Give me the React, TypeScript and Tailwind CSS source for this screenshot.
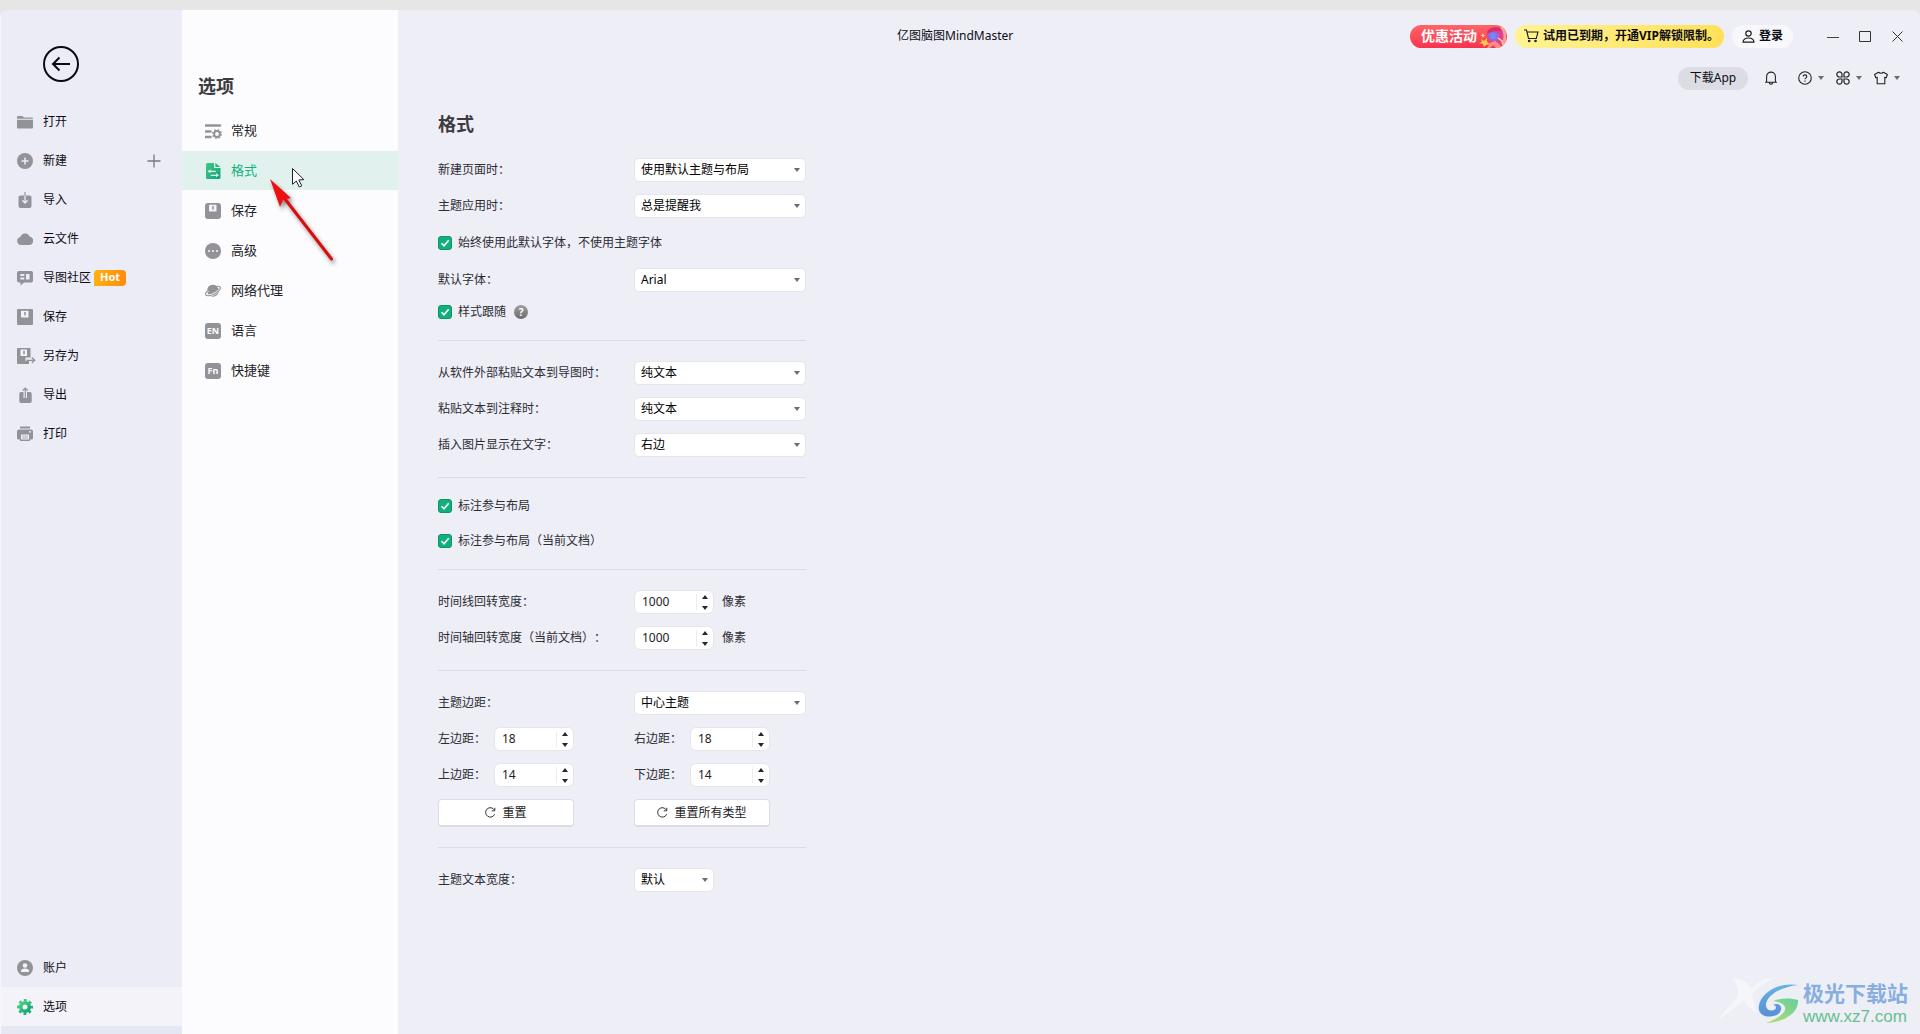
import { useState } from "react";
import type { ReactNode } from "react";

const Svg = ({ children, size = 16 }: { children: ReactNode; size?: number }) => (
  <svg width={size} height={size} viewBox="0 0 16 16" fill="none" className="shrink-0" aria-hidden="true">
    {children}
  </svg>
);

const GRAY = "#929299";

const FolderIcon = () => (
  <Svg>
    <path d="M0 3.5c0-1 .4-1.5 1.3-1.5h4.2l1.4 1.6h7.8c.9 0 1.3.4 1.3 1.2H0z" fill={GRAY} />
    <path d="M0 5.8h16v7.4c0 .9-.5 1.4-1.4 1.4H1.4C.5 14.600 0 14.100 0 13.200z" fill={GRAY} />
  </Svg>
);

const PlusCircleIcon = () => (
  <Svg>
    <circle cx="8" cy="8" r="8" fill={GRAY} />
    <path d="M8 4.500v7M4.500 8h7" stroke="#ececf6" strokeWidth="1.500" />
  </Svg>
);

const ImportIcon = () => (
  <Svg>
    <rect x="1.500" y="3.500" width="13" height="12.500" rx="2" fill={GRAY} />
    <path d="M8 3.500v7.500M5.300 8.300 8 11l2.700-2.700" stroke="#ececf6" strokeWidth="1.300" />
    <path d="M8 0v3.500" stroke={GRAY} strokeWidth="1.200" />
  </Svg>
);

const CloudIcon = () => (
  <Svg>
    <path d="M4 14a4 4 0 0 1-.6-7.900A5 5 0 0 1 12.700 5.500 4.300 4.300 0 0 1 12.300 14z" fill={GRAY} />
  </Svg>
);

const CommunityIcon = () => (
  <Svg>
    <path d="M2 1h12a2 2 0 0 1 2 2v7.500a2 2 0 0 1-2 2H7L3.500 15.500v-3H2a2 2 0 0 1-2-2V3a2 2 0 0 1 2-2z" fill={GRAY} />
    <path d="M3.300 4h4v2h-4zM3.300 7.500h4v2h-4zM9 4h3.500v5.500H9z" fill="#ececf6" />
  </Svg>
);

const SaveIcon = ({ rounded = false }: { rounded?: boolean }) => (
  <Svg>
    <rect width="16" height="16" rx={rounded ? 3 : 1} fill={GRAY} />
    <path d="M4 1.800h7.500v6.700H4z" fill="#f2f2f8" />
    <path d="M8 3v3.500" stroke={GRAY} strokeWidth="1.500" />
  </Svg>
);

const SaveAsIcon = () => (
  <svg width="19" height="16" viewBox="0 0 19 16" fill="none" className="-mr-[3px] shrink-0" aria-hidden="true">
    <path d="M1 0h12.500v9.500H8.500V13h3.500v3H1a1 1 0 0 1-1-1V1a1 1 0 0 1 1-1z" fill={GRAY} />
    <path d="M3.500 1.500h6.500V8H3.500z" fill="#f2f2f8" />
    <path d="M7 2.800v3.500" stroke={GRAY} strokeWidth="1.500" />
    <path d="M9.500 12.300h8M14.800 9.500l2.900 2.800-2.900 2.800" stroke={GRAY} strokeWidth="1.300" />
  </svg>
);

const ExportIcon = () => (
  <Svg>
    <path d="M4 5h2.500v6h3.500V5H13a1.700 1.700 0 0 1 1.700 1.700v7.600A1.700 1.700 0 0 1 13 16H4a1.700 1.700 0 0 1-1.700-1.700V6.700A1.700 1.700 0 0 1 4 5z" fill={GRAY} />
    <path d="M8.300 11V1M5.800 3.500 8.300 1l2.500 2.500" stroke={GRAY} strokeWidth="1.200" />
  </Svg>
);

const PrintIcon = () => (
  <Svg>
    <path d="M3 .500h10v2H3z" fill={GRAY} />
    <path d="M2 3.500h12a2 2 0 0 1 2 2V12a1.500 1.500 0 0 1-1.500 1.500H13V15H3v-1.500H1.500A1.500 1.500 0 0 1 0 12V5.500a2 2 0 0 1 2-2z" fill={GRAY} />
    <path d="M4 8.500h8v5H4z" fill="#f2f2f8" />
    <path d="M5 10h6M5 12h6" stroke={GRAY} strokeWidth=".700" />
    <circle cx="13" cy="5.800" r=".9" fill="#f2f2f8" />
  </Svg>
);

const AccountIcon = () => (
  <Svg>
    <circle cx="8" cy="8" r="8" fill={GRAY} />
    <circle cx="8" cy="5.500" r="2.300" fill="#f2f2f8" />
    <path d="M3.800 12c0-2.500 1.700-3.500 4.200-3.500s4.200 1 4.200 3.500z" fill="#f2f2f8" />
  </Svg>
);

const GearIcon = () => (
  <Svg>
    <defs>
      <linearGradient id="gear" x1="0" y1="0" x2="1" y2="1">
        <stop stopColor="#4fd07c" />
        <stop offset="1" stopColor="#0fa37a" />
      </linearGradient>
    </defs>
    <circle cx="8" cy="8" r="4.300" stroke="url(#gear)" strokeWidth="3.600" />
    <circle cx="8" cy="8" r="6.700" stroke="url(#gear)" strokeWidth="2.600" strokeDasharray="2.800 2.462" strokeDashoffset="1.400" />
  </Svg>
);

const GeneralIcon = () => (
  <svg width="17" height="16" viewBox="0 0 17 16" fill="none" className="-mr-px shrink-0" aria-hidden="true">
    <path d="M1 2.500h14M1 8.500h4.500M1 14h4.500" stroke={GRAY} strokeWidth="2.600" strokeLinecap="round" />
    <circle cx="12" cy="11" r="2.900" stroke={GRAY} strokeWidth="2" />
    <circle cx="12" cy="11" r="4.300" stroke={GRAY} strokeWidth="1.400" strokeDasharray="1.700 1.677" />
  </svg>
);

const FormatIcon = () => (
  <Svg>
    <defs>
      <linearGradient id="format" x1="0" y1="0" x2="1" y2="1">
        <stop stopColor="#3fca7d" />
        <stop offset="1" stopColor="#12a57d" />
      </linearGradient>
    </defs>
    <path d="M2.500 0H9v5h6.500v9.500A1.500 1.500 0 0 1 14 16H2.500A1.500 1.500 0 0 1 1 14.500v-13A1.500 1.500 0 0 1 2.500 0z" fill="url(#format)" />
    <path d="M10.300 0 15.500 4H10.300z" fill="#2dbb7c" />
    <path d="M3.300 8.300h7.500M5.800 12.300h7.500" stroke="#e1f1ed" strokeWidth="1.200" />
    <path d="M5.500 6.300v4l-2.700-2zM11 10.300v4l2.700-2z" fill="#e1f1ed" />
  </Svg>
);

const MoreIcon = () => (
  <Svg>
    <circle cx="8" cy="8" r="8" fill={GRAY} />
    <path d="M4 8h.01M8 8h.01M12 8h.01" stroke="#fff" strokeWidth="1.900" strokeLinecap="round" />
  </Svg>
);

const PlanetIcon = () => (
  <Svg>
    <circle cx="8" cy="7.800" r="6" fill={GRAY} />
    <ellipse cx="8" cy="8" rx="8.500" ry="3.200" transform="rotate(-27 8 8)" stroke="#fcfcfe" strokeWidth="2.400" />
    <ellipse cx="8" cy="8" rx="8.200" ry="3.300" transform="rotate(-27 8 8)" stroke={GRAY} strokeWidth="1.100" />
    <path d="M2.500 7.800A5.800 5.800 0 0 1 12.700 4c-1.500 2.500-5 4.800-10.200 3.800z" fill={GRAY} />
  </Svg>
);

const TextTile = ({ text }: { text: string }) => (
  <span className="flex size-4 shrink-0 items-center justify-center rounded-[3px] bg-[#929299] text-[9px] leading-none font-bold text-white">
    {text}
  </span>
);

const Caret = ({ className = "" }: { className?: string }) => (
  <svg width="6" height="4" viewBox="0 0 6 4" className={className} aria-hidden="true">
    <path d="M0 0h6L3 4z" fill="#6b6b70" />
  </svg>
);

const fileItems = [
  { label: "打开", icon: <FolderIcon /> },
  { label: "新建", icon: <PlusCircleIcon />, plus: true },
  { label: "导入", icon: <ImportIcon /> },
  { label: "云文件", icon: <CloudIcon /> },
  { label: "导图社区", icon: <CommunityIcon />, hot: true },
  { label: "保存", icon: <SaveIcon /> },
  { label: "另存为", icon: <SaveAsIcon /> },
  { label: "导出", icon: <ExportIcon /> },
  { label: "打印", icon: <PrintIcon /> },
];

const optionItems = [
  { label: "常规", icon: <GeneralIcon /> },
  { label: "格式", icon: <FormatIcon /> },
  { label: "保存", icon: <SaveIcon rounded /> },
  { label: "高级", icon: <MoreIcon /> },
  { label: "网络代理", icon: <PlanetIcon /> },
  { label: "语言", icon: <TextTile text="EN" /> },
  { label: "快捷键", icon: <TextTile text="Fn" /> },
];

type SideItemProps = {
  label: string;
  icon: ReactNode;
  plus?: boolean;
  hot?: boolean;
  active?: boolean;
};

const SideItem = ({ label, icon, plus, hot, active }: SideItemProps) => (
  <button type="button" className={active ? "flex h-[39px] w-full items-center bg-[#f4f3f9] px-4" : "flex h-[39px] w-full items-center px-4"}>
    {icon}
    <span className="ml-2.5">{label}</span>
    {hot && (
      <span className="ml-[3px] flex h-4 w-8 items-center justify-center rounded-[4px] rounded-bl-none bg-linear-to-r from-[#ffb012] to-[#ff8c0a] text-[11px] font-bold text-white">
        Hot
      </span>
    )}
    {plus && (
      <svg width="14" height="14" viewBox="0 0 14 14" className="mr-[5px] ml-auto" aria-hidden="true">
        <path d="M7 .500v13M.500 7h13" stroke="#77777d" strokeWidth="1.300" />
      </svg>
    )}
  </button>
);

const FileSidebar = () => (
  <aside className="flex w-[182px] shrink-0 flex-col border-l border-[#f6f6fb] bg-[#ececf6] text-xs text-[#0c0c14]">
    <button type="button" aria-label="返回" className="mt-9 ml-[42px] size-9">
      <svg width="36" height="36" viewBox="0 0 36 36" fill="none" stroke="#0a0a10" strokeWidth="2">
        <circle cx="18" cy="18" r="17" />
        <path d="M27 18H10M16.500 11.500 10 18l6.500 6.500" />
      </svg>
    </button>
    <nav className="mt-5 flex flex-col">
      {fileItems.map((item) => (
        <SideItem key={item.label} {...item} />
      ))}
    </nav>
    <nav className="mt-auto flex flex-col border-b-8 border-[#e6e7f4]">
      <SideItem label="账户" icon={<AccountIcon />} />
      <SideItem label="选项" icon={<GearIcon />} active />
    </nav>
  </aside>
);

const OptionsPanel = () => {
  const [current, setCurrent] = useState("格式");
  return (
    <section className="w-[216px] shrink-0 bg-[#fcfcfe] text-[13px] text-[#222226]">
      <h1 className="mt-[63px] mb-3 pl-4 text-lg leading-[26px] font-bold text-[#3b3b40]">选项</h1>
      <nav className="flex flex-col gap-px">
        {optionItems.map((item) => (
          <button
            key={item.label}
            type="button"
            onClick={() => setCurrent(item.label)}
            className={
              item.label === current
                ? "flex h-[39px] items-center gap-2.5 bg-[#e1f1ed] pl-[23px] text-[#12b17e]"
                : "flex h-[39px] items-center gap-2.5 pl-[23px]"
            }
          >
            {item.icon}
            {item.label}
          </button>
        ))}
      </nav>
    </section>
  );
};

const PromoArt = () => (
  <svg width="29" height="23" viewBox="0 0 29 23" fill="none" aria-hidden="true">
    <path d="M24 2c4 3 5 11 2 18" stroke="#ff9f9a" strokeWidth="3" />
    <path d="M10 7c2-4 8-6 13-4 3 2 4 7 3 12l-4 5-10-3z" fill="#e2408c" />
    <path d="M10 7c2-4 8-6 13-4l1 3c-5-1-9 0-13 3z" fill="#d52f6c" />
    <path d="M11 9c3-3 8-3 11 0 1 4-2 7-6 7-3 0-5-3-5-7z" fill="#8f6be6" />
    <circle cx="16" cy="11" r="3" fill="#6f8cf2" />
    <path d="M4 14l3 2 3-3v4l3 2-4 1-2 2-1-3-4-1 3-1z" fill="#ffc94d" />
    <path d="M13 18l5-2 4 3 3 4h-6l-3-3-3 3h-3z" fill="#ff8f86" />
    <path d="M21 13l4 3 1 4" stroke="#ffd0a0" strokeWidth="1.500" />
    <path d="M6 8l.8 1.700 1.700.8-1.700.8L6 13l-.8-1.700-1.700-.8 1.700-.8z" fill="#ffd58a" />
  </svg>
);

const TitleBar = () => (
  <header className="text-xs text-[#0c0c14]">
    <div className="flex h-[52px] items-center pr-[7px]">
      <div className="ml-[calc(50vw-461px)]">亿图脑图MindMaster</div>
      <div className="ml-auto flex items-center">
        <button type="button" className="flex h-[23px] w-[97px] items-center overflow-hidden rounded-full bg-linear-to-b from-[#ff6468] to-[#f8304e] pl-[11px] text-sm leading-5 font-bold whitespace-nowrap text-white">
          优惠活动
          <PromoArt />
        </button>
        <button type="button" className="ml-2 flex h-[23px] w-[209px] items-center gap-1 rounded-full bg-linear-to-r from-[#fff391] to-[#ffe057] pl-[9px] font-bold whitespace-nowrap">
          <svg width="15" height="14" viewBox="0 0 15 14" fill="none" stroke="#1b1b1b" strokeWidth="1.100" className="shrink-0" aria-hidden="true">
            <path d="M0 1h2.500l2 8.500h7.800L14 3H3.200" />
            <circle cx="5.200" cy="12" r=".8" />
            <circle cx="11.500" cy="12" r=".8" />
          </svg>
          试用已到期，开通VIP解锁限制。
        </button>
        <button type="button" className="ml-2 flex h-[23px] w-[61px] items-center gap-1 rounded-full bg-[#f8f8fc] pl-2.5 font-bold">
          <svg width="13" height="13" viewBox="0 0 13 13" fill="none" stroke="#1b1b1b" strokeWidth="1.200" aria-hidden="true">
            <circle cx="6.500" cy="3.500" r="2.700" />
            <path d="M1 12.200c.2-3 2-4.200 5.500-4.200s5.300 1.200 5.500 4.200z" />
          </svg>
          登录
        </button>
        <div className="ml-6 flex">
          <button type="button" aria-label="最小化" className="flex h-6 w-8 items-center justify-center">
            <svg width="12" height="11" viewBox="0 0 12 11"><path d="M0 6.500h12" stroke="#444" /></svg>
          </button>
          <button type="button" aria-label="最大化" className="flex h-6 w-8 items-center justify-center">
            <svg width="12" height="11" viewBox="0 0 12 11" fill="none"><path d="M.500.500h11v10H.500z" stroke="#333" /></svg>
          </button>
          <button type="button" aria-label="关闭" className="flex h-6 w-8 items-center justify-center">
            <svg width="11" height="11" viewBox="0 0 11 11"><path d="M.500.500l10 10M10.500.500l-10 10" stroke="#333" /></svg>
          </button>
        </div>
      </div>
    </div>
    <div className="flex h-8 items-center justify-end pr-5">
      <button type="button" className="h-[23px] w-[70px] rounded-full bg-[#dcdde4]">下载App</button>
      <button type="button" aria-label="通知" className="ml-4">
        <svg width="14" height="14" viewBox="0 0 14 14" fill="none" stroke="#222" strokeWidth="1.100">
          <path d="M1 11.300h12M2.600 11V5.500a4.400 4.400 0 0 1 8.800 0V11M5.300 11.500a1.700 1.700 0 0 0 3.400 0" />
        </svg>
      </button>
      <button type="button" aria-label="帮助" className="ml-5 flex items-center gap-1.5">
        <svg width="14" height="14" viewBox="0 0 14 14" fill="none" stroke="#222" strokeWidth="1.100">
          <circle cx="7" cy="7" r="6.300" />
          <path d="M5.200 5.600c0-2.400 3.600-2.300 3.600-.1 0 1.300-1.800 1.400-1.800 2.800M7 9.600v1.200" />
        </svg>
        <Caret />
      </button>
      <button type="button" aria-label="应用" className="ml-3 flex items-center gap-1.5">
        <svg width="14" height="14" viewBox="0 0 14 14" fill="none" stroke="#222" strokeWidth="1.200">
          <path d="M6 6H3.500A2.600 2.600 0 1 1 6 3.500zM8 6V3.500A2.600 2.600 0 1 1 10.500 6zM6 8v2.500A2.600 2.600 0 1 1 3.500 8zM8 8h2.500A2.600 2.600 0 1 1 8 10.500z" />
        </svg>
        <Caret />
      </button>
      <button type="button" aria-label="皮肤" className="ml-3 flex items-center gap-1.5">
        <svg width="14" height="14" viewBox="0 0 14 14" fill="none" stroke="#222" strokeWidth="1.100" strokeLinejoin="round">
          <path d="M4.500 1.200c1 1.300 4 1.300 5 0l3.900 2.300-1.200 3.300-1.400-.5v6.500H3.200V6.300l-1.400.5L.6 3.500z" />
        </svg>
        <Caret />
      </button>
    </div>
  </header>
);

type SelectFieldProps = { id: string; label: string; value: string; short?: boolean };

const SelectField = ({ id, label, value, short }: SelectFieldProps) => (
  <div className="flex h-9 items-center">
    <label htmlFor={id} className="w-[196px]">{label}</label>
    <div className={short ? "relative w-20" : "relative w-[172px]"}>
      <select id={id} className="block h-6 w-full appearance-none rounded-[5px] border border-[#e5e5ea] bg-white pl-1.5 text-xs text-black">
        <option>{value}</option>
      </select>
      <Caret className="pointer-events-none absolute top-2.5 right-1.5" />
    </div>
  </div>
);

const NumberBox = ({ id, initial }: { id: string; initial: number }) => {
  const [value, setValue] = useState(initial);
  return (
    <div className="flex h-6 w-20 items-center rounded-[6px] border border-[#e5e5ea] bg-white">
      <input
        id={id}
        inputMode="numeric"
        value={value}
        onChange={(e) => setValue(Number(e.target.value) || 0)}
        className="h-4 w-[62px] border-r border-[#ededf0] pl-[7px] text-xs text-[#222226] outline-none"
      />
      <div className="flex flex-1 flex-col items-center gap-[7px]">
        <button type="button" aria-label="增加" onClick={() => setValue(value + 1)}>
          <svg width="6" height="4" viewBox="0 0 6 4" className="block"><path d="M0 4h6L3 0z" fill="#26262b" /></svg>
        </button>
        <button type="button" aria-label="减少" onClick={() => setValue(value - 1)}>
          <svg width="6" height="4" viewBox="0 0 6 4" className="block"><path d="M0 0h6L3 4z" fill="#26262b" /></svg>
        </button>
      </div>
    </div>
  );
};

const WidthField = ({ id, label }: { id: string; label: string }) => (
  <div className="flex h-9 items-center">
    <label htmlFor={id} className="w-[196px]">{label}</label>
    <NumberBox id={id} initial={1000} />
    <span className="ml-2">像素</span>
  </div>
);

const MarginField = ({ id, label, initial }: { id: string; label: string; initial: number }) => (
  <div className="flex h-9 items-center">
    <label htmlFor={id} className="w-14">{label}</label>
    <NumberBox id={id} initial={initial} />
  </div>
);

const CheckField = ({ label }: { label: string }) => (
  <label className="flex items-center gap-1.5">
    <span className="relative size-3.5">
      <input type="checkbox" defaultChecked className="peer block size-3.5 appearance-none rounded-[3px] border border-[#0c9468] bg-white checked:bg-[#10b07c]" />
      <svg width="14" height="14" viewBox="0 0 14 14" fill="none" className="pointer-events-none absolute inset-0 hidden peer-checked:block" aria-hidden="true">
        <path d="M3.500 7.200 6 9.800l4.700-5.600" stroke="#fff" strokeWidth="1.600" />
      </svg>
    </span>
    {label}
  </label>
);

const ResetButton = ({ label }: { label: string }) => (
  <button type="button" className="flex h-7 w-[136px] items-center justify-center gap-1.5 rounded-[4px] border border-b-2 border-[#dcdce4] bg-white text-[#222226]">
    <svg width="11" height="11" viewBox="0 0 11 11" fill="none" stroke="#333" aria-hidden="true">
      <path d="M9.700 7.200A4.700 4.700 0 1 1 9.400 3M9.800.800v3H6.800" />
    </svg>
    {label}
  </button>
);

const FormatForm = () => (
  <form className="ml-10 w-[368px] pt-4 text-xs text-[#2c2c33]">
    <h2 className="mb-3.5 text-lg leading-7 font-bold text-[#3b3b40]">格式</h2>

    <div className="border-b border-[#dcdce3] pb-3.5">
      <SelectField id="new-page" label="新建页面时：" value="使用默认主题与布局" />
      <SelectField id="theme-apply" label="主题应用时：" value="总是提醒我" />
      <div className="flex h-[38px] items-center">
        <CheckField label="始终使用此默认字体，不使用主题字体" />
      </div>
      <SelectField id="font" label="默认字体：" value="Arial" />
      <div className="flex h-7 items-center gap-2">
        <CheckField label="样式跟随" />
        <button type="button" aria-label="说明" className="flex size-3.5 items-center justify-center rounded-full bg-linear-to-b from-[#a0a0a2] to-[#6c6c6e] text-[10px] leading-none font-bold text-white">
          ?
        </button>
      </div>
    </div>

    <div className="border-b border-[#dcdce3] py-3.5">
      <SelectField id="paste-map" label="从软件外部粘贴文本到导图时：" value="纯文本" />
      <SelectField id="paste-note" label="粘贴文本到注释时：" value="纯文本" />
      <SelectField id="image-side" label="插入图片显示在文字：" value="右边" />
    </div>

    <div className="flex flex-col gap-[19px] border-b border-[#dcdce3] py-5">
      <CheckField label="标注参与布局" />
      <CheckField label="标注参与布局（当前文档）" />
    </div>

    <div className="border-b border-[#dcdce3] py-3.5">
      <WidthField id="timeline" label="时间线回转宽度：" />
      <WidthField id="timeline-doc" label="时间轴回转宽度（当前文档）：" />
    </div>

    <div className="border-b border-[#dcdce3] py-3.5">
      <SelectField id="topic-margin" label="主题边距：" value="中心主题" />
      <div className="grid grid-cols-[196px_1fr]">
        <MarginField id="left" label="左边距：" initial={18} />
        <MarginField id="right" label="右边距：" initial={18} />
        <MarginField id="top" label="上边距：" initial={14} />
        <MarginField id="bottom" label="下边距：" initial={14} />
        <div className="flex h-10 items-center"><ResetButton label="重置" /></div>
        <div className="flex h-10 items-center"><ResetButton label="重置所有类型" /></div>
      </div>
    </div>

    <div className="py-3.5">
      <SelectField id="text-width" label="主题文本宽度：" value="默认" short />
    </div>
  </form>
);

const Pointer = () => (
  <svg width="80" height="106" viewBox="0 0 80 106" fill="none" className="pointer-events-none absolute top-[162px] left-[266px]" aria-hidden="true">
    <path d="M26.500 6.500v15.800l3.800-3.300 3 6 2.500-1.200-3-5.800 5-.400z" fill="#fff" stroke="#222" />
    <g className="drop-shadow-[2px_3px_2px_rgba(0,0,0,0.45)]">
      <path d="M19 37 65.500 97" stroke="#d90d0d" strokeWidth="3" strokeLinecap="round" />
      <path d="M4 17 25 36l-8 2-3 7z" fill="#ee1010" />
    </g>
  </svg>
);

const Watermark = () => (
  <div className="pointer-events-none absolute right-3 bottom-2 flex items-end">
    <svg width="86" height="52" viewBox="0 0 86 52" fill="none" aria-hidden="true">
      <defs>
        <linearGradient id="swoosh" x1="0" y1="0" x2="0" y2="1">
          <stop stopColor="#63b3e4" />
          <stop offset="1" stopColor="#5a8fd6" />
        </linearGradient>
        <linearGradient id="leaf" x1="1" y1="0" x2="0" y2="1">
          <stop stopColor="#64cfa0" />
          <stop offset="1" stopColor="#b9dc6a" />
        </linearGradient>
      </defs>
      <path d="M15 4c10 0 15 4 19 10 6-6 14-10 25-10-12 5-20 10-24 17l5 18C32 34 28 30 27 26 17 35 9 41 0 46c8-9 15-16 21-24C21 14 19 9 15 4z" fill="#fff" opacity=".4" />
      <path d="M81 11C62 8 45 18 42 31c-2 9 6 13 14 11 6-1 9-5 8-9-1-3-5-4-8-2 2 0 3 1 3 3-1 3-9 4-10-2C48 23 62 13 81 11z" fill="url(#swoosh)" />
      <path d="M56 27c7-3 15-3 25-1 1 12-12 22-32 23 9-3 17-8 19-13 1-5-4-8-12-9z" fill="url(#leaf)" />
    </svg>
    <div className="flex flex-col">
      <span className="text-[21px] leading-7 font-bold text-[#86aee0]">极光下载站</span>
      <a href="#" className="font-['Liberation_Sans',sans-serif] text-[17px] leading-[19px] text-[#66c08d]">www.xz7.com</a>
    </div>
  </div>
);

const App = () => (
  <div className="relative flex min-h-screen flex-col bg-[#e6e6e6] pt-2.5 font-['Noto_Sans','Noto_Sans_CJK_SC',sans-serif] [text-spacing-trim:space-all]">
    <div className="flex flex-1 overflow-hidden rounded-t-lg bg-[#eeeef7]">
      <FileSidebar />
      <OptionsPanel />
      <main className="min-w-0 flex-1">
        <TitleBar />
        <FormatForm />
      </main>
    </div>
    <Pointer />
    <Watermark />
  </div>
);

export default App;
